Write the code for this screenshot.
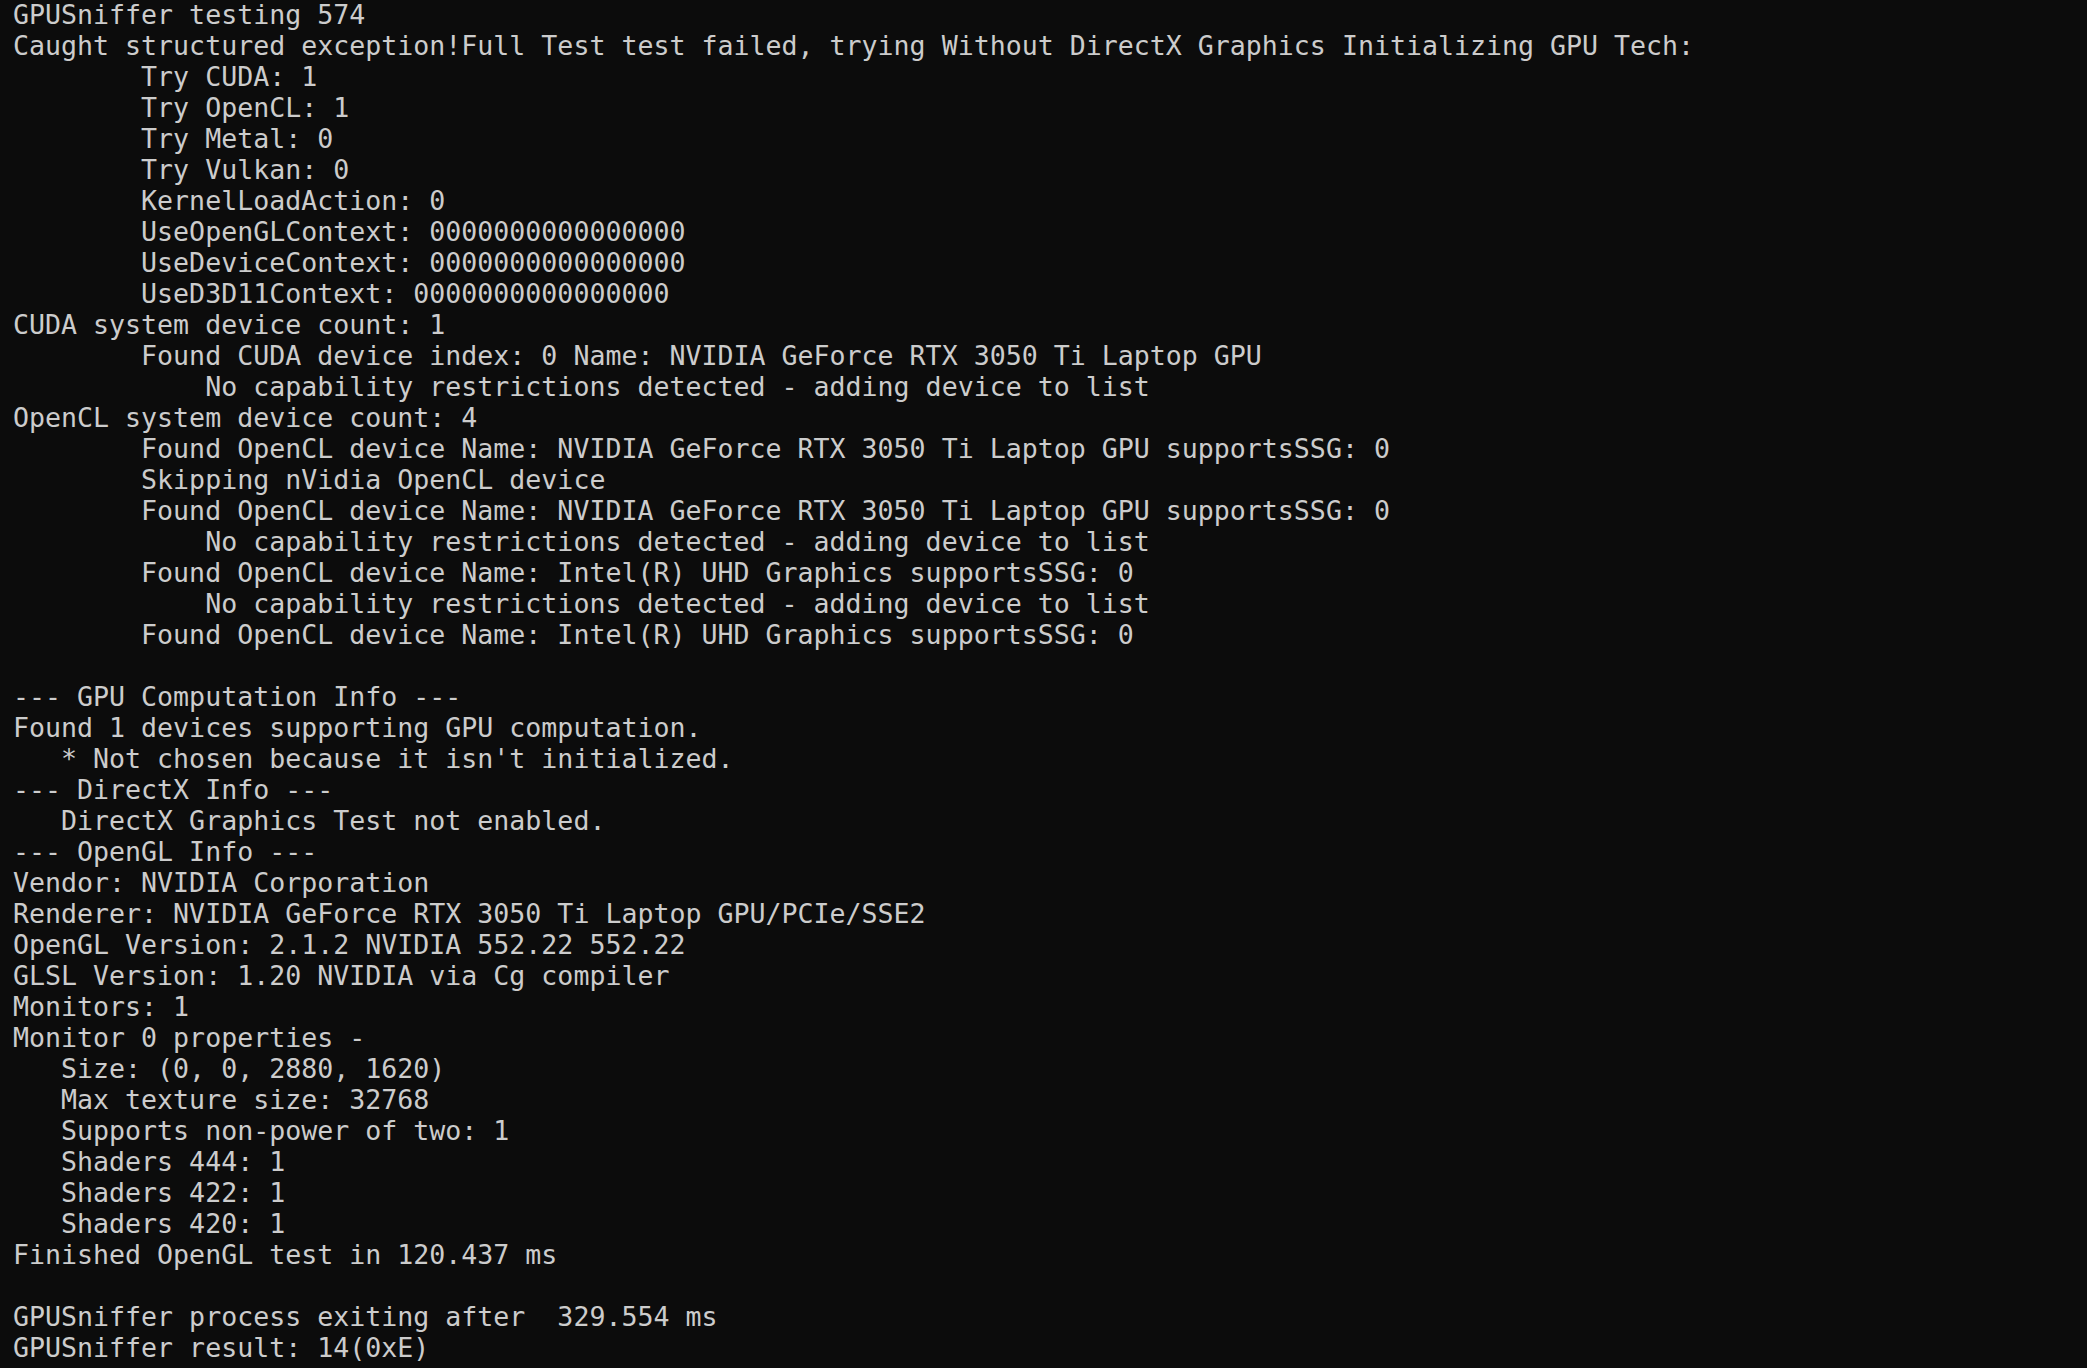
const lines: string[] = [
  "GPUSniffer testing 574",
  "Caught structured exception!Full Test test failed, trying Without DirectX Graphics Initializing GPU Tech:",
  "        Try CUDA: 1",
  "        Try OpenCL: 1",
  "        Try Metal: 0",
  "        Try Vulkan: 0",
  "        KernelLoadAction: 0",
  "        UseOpenGLContext: 0000000000000000",
  "        UseDeviceContext: 0000000000000000",
  "        UseD3D11Context: 0000000000000000",
  "CUDA system device count: 1",
  "        Found CUDA device index: 0 Name: NVIDIA GeForce RTX 3050 Ti Laptop GPU",
  "            No capability restrictions detected - adding device to list",
  "OpenCL system device count: 4",
  "        Found OpenCL device Name: NVIDIA GeForce RTX 3050 Ti Laptop GPU supportsSSG: 0",
  "        Skipping nVidia OpenCL device",
  "        Found OpenCL device Name: NVIDIA GeForce RTX 3050 Ti Laptop GPU supportsSSG: 0",
  "            No capability restrictions detected - adding device to list",
  "        Found OpenCL device Name: Intel(R) UHD Graphics supportsSSG: 0",
  "            No capability restrictions detected - adding device to list",
  "        Found OpenCL device Name: Intel(R) UHD Graphics supportsSSG: 0",
  "",
  "--- GPU Computation Info ---",
  "Found 1 devices supporting GPU computation.",
  "   * Not chosen because it isn't initialized.",
  "--- DirectX Info ---",
  "   DirectX Graphics Test not enabled.",
  "--- OpenGL Info ---",
  "Vendor: NVIDIA Corporation",
  "Renderer: NVIDIA GeForce RTX 3050 Ti Laptop GPU/PCIe/SSE2",
  "OpenGL Version: 2.1.2 NVIDIA 552.22 552.22",
  "GLSL Version: 1.20 NVIDIA via Cg compiler",
  "Monitors: 1",
  "Monitor 0 properties -",
  "   Size: (0, 0, 2880, 1620)",
  "   Max texture size: 32768",
  "   Supports non-power of two: 1",
  "   Shaders 444: 1",
  "   Shaders 422: 1",
  "   Shaders 420: 1",
  "Finished OpenGL test in 120.437 ms",
  "",
  "GPUSniffer process exiting after  329.554 ms",
  "GPUSniffer result: 14(0xE)",
];

export default function App() {
  return (
    <div className="w-[2087px] h-[1368px] overflow-hidden bg-[#0c0c0c] text-[#cccccc] pl-[13px]">
      <div className="-mt-[1px] font-['DejaVu_Sans_Mono','Liberation_Mono',monospace] text-[26.6px] leading-[31px] whitespace-pre">
        {lines.map((l, i) => (
          <div key={i} className="h-[31px]">
            {l}
          </div>
        ))}
      </div>
    </div>
  );
}
